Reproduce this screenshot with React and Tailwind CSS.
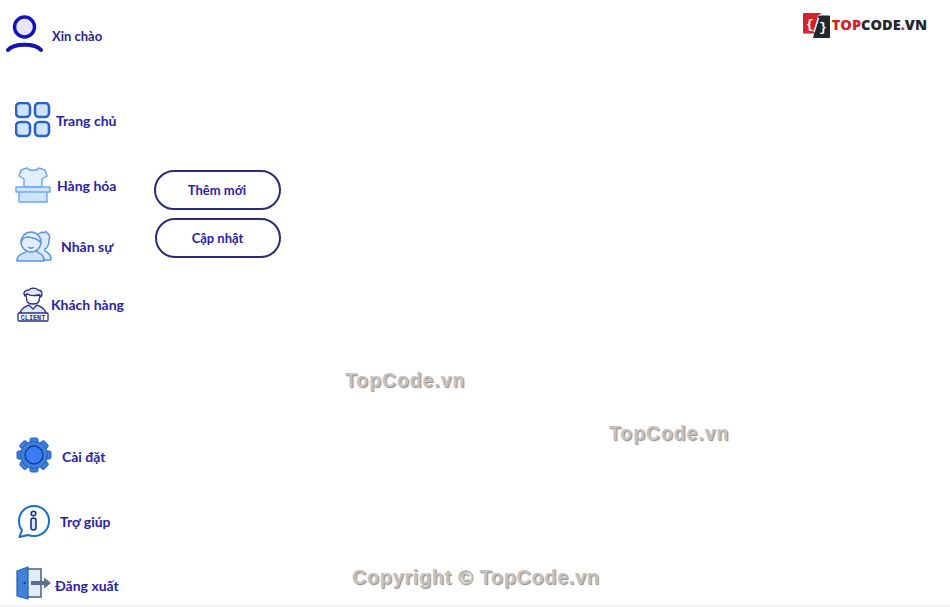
const FILL = "#cfe3fb";

const UserIcon = () => (
  <svg width="38" height="38" viewBox="0 0 38 38" fill="none" className="shrink-0">
    <circle cx="18.500" cy="12" r="10" fill="#e6e6fb" stroke="#1414b4" strokeWidth="3.400" />
    <path d="M2 35 C 8 28, 29 28, 35 35" stroke="#1414b4" strokeWidth="4" strokeLinecap="round" />
  </svg>
);

const GridIcon = () => (
  <svg width="36" height="36" viewBox="0 0 36 36" fill="none" className="shrink-0">
    {[[1, 1], [20, 1], [1, 20], [20, 20]].map(([x, y]) => (
      <rect key={`${x}-${y}`} x={x} y={y} width="14" height="14" rx="4" fill={FILL} stroke="#2a62c9" strokeWidth="2.600" />
    ))}
  </svg>
);

const BoxIcon = () => (
  <svg width="36" height="36" viewBox="0 0 36 36" fill="none" className="shrink-0" stroke="#6aa6f2" strokeWidth="1.400" strokeLinejoin="round">
    <path d="M12 1 L6 3 L4 9 L9 12 L9 20 L27 20 L27 12 L32 9 L30 3 L24 1 C 22 4, 14 4, 12 1 Z" fill="#e4effd" />
    <path d="M1 20 H35 V25 H32 V35 H4 V25 H1 Z" fill={FILL} />
    <path d="M4 25 H32" />
  </svg>
);

const StaffIcon = () => (
  <svg width="36" height="34" viewBox="0 0 36 34" fill="none" className="shrink-0" stroke="#5b93e6" strokeWidth="1.500" strokeLinejoin="round">
    <path d="M21 7 C 22 3, 24 5, 26 3 C 27 5, 30 1, 31 4 C 34 5, 34 9, 33 11 C 33 16, 31 19, 29 20 L29 22 C 32 24, 35 25, 35 31 L25 31 L20 20 Z" fill="#dcebfc" />
    <path d="M1 32 C 1 25, 7 25, 11 22 L20 22 C 24 25, 28 25, 28 32 Z" fill={FILL} />
    <circle cx="15" cy="13" r="10" fill="#e4effd" />
    <path d="M5 14 C 6 9, 9 8, 12 8 C 16 9, 21 8, 25 14" />
    <path d="M12 18 C 14 19.500, 16 19.500, 18 18" />
  </svg>
);

const ClientIcon = () => (
  <svg width="32" height="35" viewBox="0 0 32 35" fill="none" className="shrink-0" stroke="#2b2b8f" strokeWidth="1.300" strokeLinejoin="round">
    <path d="M8 9 C 5 5, 9 3, 12 3 C 14 0, 20 1, 21 3 C 25 3, 26 7, 24 10 L22 8 C 18 9, 13 9, 10 7 Z" fill="#dfe9fb" />
    <path d="M9 8 L10 14 C 11 18, 21 18, 22 14 L23 8 C 18 9, 13 9, 10 7 Z" fill="#fff" />
    <path d="M3 26 C 4 21, 8 20, 12 18 L16 22 L20 18 C 24 20, 28 21, 29 26" fill="#dfe9fb" />
    <rect x="1" y="26" width="30" height="8" rx="1" fill="#fff" />
    <text x="16" y="32.500" textAnchor="middle" fontFamily="Liberation Mono, monospace" fontSize="6.800" fontWeight="700" fill="#2b2b8f" stroke="none">CLIENT</text>
  </svg>
);

const GearIcon = () => (
  <svg width="36" height="36" viewBox="0 0 36 36" fill="none" className="shrink-0">
    <g fill="#3f7edb" stroke="#2160bc" strokeWidth="1">
      {[0, 45, 90, 135, 180, 225, 270, 315].map((deg) => (
        <rect key={deg} x="14" y="1" width="8" height="9" rx="1.500" transform={`rotate(${deg} 18 18)`} />
      ))}
      <circle cx="18" cy="18" r="13.500" />
    </g>
    <circle cx="18" cy="18" r="9" fill="#3b7cf5" stroke="#123f99" strokeWidth="1.400" />
  </svg>
);

const HelpIcon = () => (
  <svg width="34" height="35" viewBox="0 0 34 35" fill="none" className="shrink-0">
    <path d="M17 2 C 8 2, 2 9, 2 17 C 2 21, 3 24, 5 26 L2.500 33 L11 31 C 13 32, 15 32, 17 32 C 26 32, 32 25, 32 17 C 32 9, 26 2, 17 2 Z" fill="#fff" stroke="#1c6fc4" strokeWidth="2" strokeLinejoin="round" />
    <circle cx="16.500" cy="9.500" r="2.300" fill="#dbe9fb" stroke="#16308f" strokeWidth="1.500" />
    <rect x="14" y="14" width="5" height="12" rx="2.500" fill="#dbe9fb" stroke="#16308f" strokeWidth="1.600" />
  </svg>
);

const LogoutIcon = () => (
  <svg width="36" height="34" viewBox="0 0 36 34" fill="none" className="shrink-0">
    <rect x="10" y="3" width="15" height="28" fill="#e4ecf9" stroke="#4c5f7a" strokeWidth="1.500" />
    <path d="M1 5 L12 1 V33 L1 30 Z" fill="#3f82dc" stroke="#2560b5" strokeWidth="1.200" strokeLinejoin="round" />
    <circle cx="8.500" cy="17" r="1.100" fill="#15315f" />
    <path d="M15 15 H28 V11.500 L35 17 L28 22.500 V19 H15 Z" fill="#5b6f8c" />
  </svg>
);

const LogoMark = () => (
  <svg width="27" height="25" viewBox="0 0 27 25" className="shrink-0">
    <path d="M0 1 Q0 0 1 0 H19 L15 2.500 L11 20.500 H1 Q0 20.500 0 19.500 Z" fill="#d4232a" />
    <path d="M15.500 2.500 H26 Q27 2.500 27 3.500 V24 Q27 25 26 25 H10 Z" fill="#23262b" />
    <text x="3" y="14.500" fontFamily="Liberation Mono, monospace" fontSize="13" fontWeight="700" fill="#fff">{"{"}</text>
    <path d="M15.500 5 L11 19" stroke="#fff" strokeWidth="1.500" />
    <text x="16" y="18" fontFamily="Liberation Mono, monospace" fontSize="13" fontWeight="700" fill="#fff">{"}"}</text>
  </svg>
);

const NavRow = ({ icon, label, className, labelClass = "mt-0" }) => (
  <a className={`flex items-center text-[14px] font-bold text-[#2a22a8] ${className}`}>
    {icon}
    <span className={`whitespace-nowrap ${labelClass}`}>{label}</span>
  </a>
);

const Watermark = ({ children, className }) => (
  <span className={`absolute font-bold text-[#c4c2c2] [text-shadow:1px_1px_1px_#8a8a8a] ${className}`} style={{ fontFamily: '"Liberation Sans", Arial, sans-serif' }}>
    {children}
  </span>
);

export default function App() {
  return (
    <div className="relative flex h-[607px] w-[950px] overflow-hidden border-b-2 border-[#f3f3f3] bg-white" style={{ fontFamily: 'Lato, "Noto Sans", sans-serif' }}>
      {/* Sidebar */}
      <aside className="flex w-[154px] shrink-0 flex-col">
        <div className="ml-[6px] mt-[15px] flex items-center gap-2 text-[13px] font-bold text-[#2a1f8f]">
          <UserIcon />
          <span className="mt-[5px]">Xin chào</span>
        </div>

        <NavRow className="ml-[15px] mt-[49px] gap-[5px]" icon={<GridIcon />} label="Trang chủ" />
        <NavRow className="ml-[15px] mt-[29px] gap-[6px]" icon={<BoxIcon />} label="Hàng hóa" />
        <NavRow className="ml-[16px] mt-[26px] gap-[9px]" icon={<StaffIcon />} label="Nhân sự" />
        <NavRow className="ml-[17px] mt-[24px] gap-[2px]" icon={<ClientIcon />} label="Khách hàng" />

        <div className="flex-1" />

        <NavRow className="ml-[16px] gap-[10px]" labelClass="mt-[2px]" icon={<GearIcon />} label="Cài đặt" />
        <NavRow className="ml-[17px] mt-[31px] gap-[9px]" icon={<HelpIcon />} label="Trợ giúp" />
        <NavRow className="ml-[16px] mb-[5px] mt-[27px] gap-[3px]" labelClass="mt-[4px]" icon={<LogoutIcon />} label="Đăng xuất" />
      </aside>

      {/* Sub menu */}
      <div className="mt-[170px] flex w-[128px] flex-col gap-[8px]">
        <button className="h-[40px] w-[127px] rounded-full border-2 border-[#2c2a7c] pr-[1px] pt-[2px] text-[13px] font-bold text-[#2a22a8]">Thêm mới</button>
        <button className="ml-[1px] h-[40px] w-[126px] rounded-full border-2 border-[#2c2a7c] pr-[1px] pt-[1px] text-[13px] font-bold text-[#2a22a8]">Cập nhật</button>
      </div>

      {/* Logo */}
      <div className="ml-auto mr-[23px] mt-[12px] flex h-[26px] items-center gap-[2px]">
        <LogoMark />
        <span className="text-[14.500px] font-extrabold text-[#23262b]" style={{ fontFamily: '"Open Sans", sans-serif' }}>
          <span className="text-[#d4232a]">TOP</span>CODE<span className="text-[#d4232a]">.</span>VN
        </span>
      </div>

      <Watermark className="left-[345px] top-[366px] text-[19.500px] tracking-[0.9px]">TopCode.vn</Watermark>
      <Watermark className="left-[609px] top-[419px] text-[19.500px] tracking-[0.9px]">TopCode.vn</Watermark>
      <Watermark className="left-[352px] top-[562px] text-[20px] tracking-[0.6px]">Copyright © TopCode.vn</Watermark>
    </div>
  );
}
